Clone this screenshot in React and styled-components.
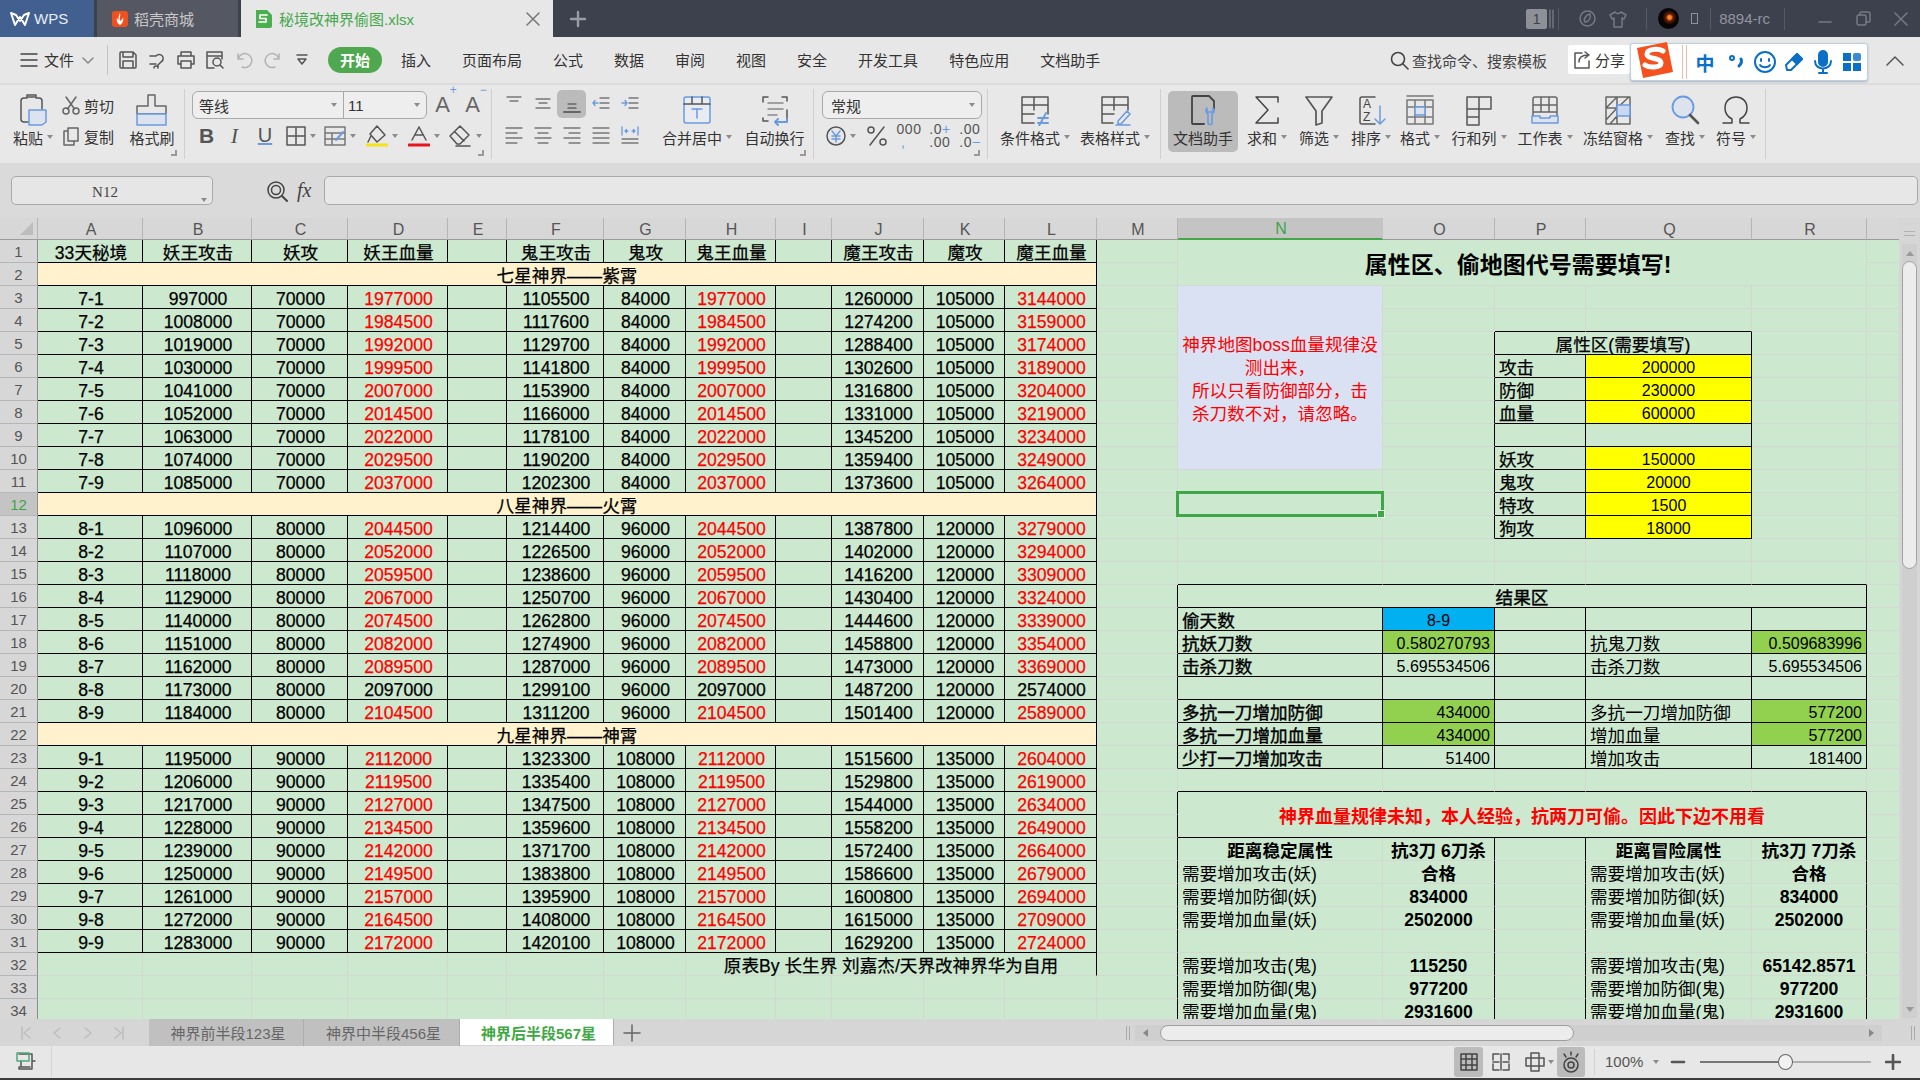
import React from 'react';
import styled, { createGlobalStyle } from 'styled-components';

const SANS = '"Liberation Sans", "Noto Sans CJK SC", sans-serif';
const GRID = '#d3d8d3';
const SHEET = '#cce8cf';

const Global = createGlobalStyle`
  html, body { margin: 0; padding: 0; width: 1920px; height: 1080px; overflow: hidden; background: #e7e7e7; }
  body { font-family: ${SANS}; color: #333; }
  * { box-sizing: border-box; }
`;

/* ---------- shell ---------- */
const Page = styled.div`
  width: 1920px; height: 1080px; display: flex; flex-direction: column; overflow: hidden;
  border-bottom: 2px solid #3c3c3c;
`;

/* ---------- title bar ---------- */
const TitleBar = styled.div`
  height: 37px; flex: none; background: #3d414e; display: flex; align-items: stretch;
`;
const WpsTab = styled.div`
  width: 94px; margin-right: 3px; background: #42608f; color: #e8edf5; display: flex; align-items: center;
  padding-left: 10px; gap: 4px; font-size: 15px;
`;
const StoreTab = styled.div`
  width: 141px; margin-right: 3px; background: #555863; color: #c8c8c8; display: flex; align-items: center;
  padding-left: 14px; gap: 5px; font-size: 15px;
`;
const DocTab = styled.div`
  width: 312px; background: #e7e7e7; color: #46a84c; display: flex; align-items: center; padding: 0 12px 0 13px;
  gap: 6px; font-size: 15px;
`;
const DocName = styled.span` flex: 1; `;
const NewTab = styled.div`
  width: 50px; display: flex; align-items: center; justify-content: center;
`;
const TitleRight = styled.div`
  margin-left: auto; display: flex; align-items: center; color: #92959e; font-size: 15px;
`;
const WinCount = styled.div`
  width: 21px; height: 20px; margin-right: 2px; background: #8e9097; color: #3d414e; border-radius: 2px; font-size: 14px;
  display: flex; align-items: center; justify-content: center;
`;
const TitleSep = styled.div`
  width: 1px; height: 22px; background: #565a66; margin: 0 ${p => p.$r ?? 10}px 0 ${p => p.$l ?? 10}px;
`;
const Avatar = styled.div`
  width: 21px; height: 21px; border-radius: 50%; background: radial-gradient(circle at 55% 45%, #ff8a2a 0 10%, #6a1c05 22%, #050505 45%);
`;
const TinyBox = styled.div`
  width: 7px; height: 11px; border: 1px solid #8f929b; margin-left: 12px;
`;
const ShirtSlot = styled.div` margin-left: 13px; `;
const WinBtn = styled.div`
  width: 38px; display: flex; justify-content: center; margin-left: ${p => p.$ml || 0}px;
`;

/* ---------- menu bar ---------- */
const MenuBar = styled.div`
  height: 48px; flex: none; background: #e7e7e7; border-bottom: 2px solid #dcdcdc; display: flex; align-items: center; position: relative;
  padding: 0 0 1px 20px; font-size: 15px; color: #333;
`;
const FileBtn = styled.div`
  display: flex; align-items: center; width: 87px;
`;
const FileLabel = styled.span` margin: 0 8px 0 6px; `;
const MenuSep = styled.div`
  width: 1px; height: 30px; background: #c4c4c4; margin-right: ${p => p.$mr || 0}px; margin-left: ${p => p.$ml || 0}px;
`;
const QuickIcon = styled.div`
  width: ${p => p.$w || 29}px; display: flex; justify-content: center;
`;
const StartPill = styled.div`
  width: 54px; height: 26px; margin: 0 19px 0 12px; background: #4fa84f; color: #fff; font-weight: 700; border-radius: 13px;
  display: flex; align-items: center; justify-content: center;
`;
const MenuItem = styled.div` margin-right: 31px; white-space: nowrap; `;
const SearchHint = styled.div`
  position: absolute; left: 1390px; top: 0; height: 46px; display: flex; align-items: center; gap: 3px; color: #444;
`;
const ShareBtn = styled.div`
  position: absolute; left: 1568px; top: 8px; width: 62px; height: 29px; background: #fff; border-radius: 2px;
  display: flex; align-items: center; padding-left: 4px; gap: 3px;
`;
const SogouBar = styled.div`
  position: absolute; left: 1630px; top: 6px; width: 238px; height: 38px; background: #fff; z-index: 3;
  border: 1px solid #bcd0e2; border-radius: 3px; box-shadow: 0 1px 2px rgba(90,120,150,.45);
  display: flex; align-items: center;
`;
const SogouLogo = styled.div` margin: -4px 0 0 3px; flex: none; `;
const SogouZh = styled.span`
  color: #0b6fc8; font-weight: 700; font-size: 19px; width: 27px; text-align: center; margin-left: 3px;
`;
const SogouRule = styled.div`
  width: 5px; height: 34px; border-left: 1px solid #f4b9a2; border-right: 1px solid #f4b9a2; margin: 0 2px 0 6px;
`;
const SogouItem = styled.div`
  width: 30px; display: flex; justify-content: center; margin-left: ${p => p.$ml || 0}px;
`;
const CollapseBtn = styled.div`
  position: absolute; left: 1885px; top: 14px;
`;

/* ---------- ribbon ---------- */
const Ribbon = styled.div`
  height: 78px; flex: none; background: #e8e8e8; display: flex; font-size: 15px; color: #333;
`;
const Group = styled.div`
  width: ${p => p.$w}px; flex: none; position: relative; padding-left: ${p => p.$pl || 0}px; display: flex;
  ${p => p.$sep !== false && 'border-right: 1px solid #cfcfcf;'}
  margin: 4px 0; height: 70px;
`;
const Launcher = styled.div`
  position: absolute; right: 7px; bottom: 3px; width: 6px; height: 6px;
  border-right: 2px solid #9a9a9a; border-bottom: 2px solid #9a9a9a;
`;
const BigBtn = styled.div`
  width: ${p => p.$w}px; flex: none; height: 61px; margin-top: 2px; display: flex; flex-direction: column; align-items: center;
  padding-top: 3px; border-radius: 5px; white-space: nowrap;
  ${p => p.$active && 'background: #bbbbbb;'}
`;
const BigIcon = styled.div` height: 32px; display: flex; align-items: center; justify-content: center; `;
const BigLabel = styled.div`
  height: 22px; display: flex; align-items: center; gap: 2px;
`;
const Caret = styled.i`
  display: inline-block; width: 0; height: 0; margin-left: 2px; border-left: 3.5px solid transparent; border-right: 3.5px solid transparent;
  border-top: 4px solid #8b8b8b;
`;
const ClipCol = styled.div`
  width: 64px; flex: none; display: flex; flex-direction: column; gap: 7px; padding-top: 4px;
`;
const ClipRow = styled.div` display: flex; align-items: center; gap: 3px; height: 24px; `;
const FontCol = styled.div`
  display: flex; flex-direction: column; padding-top: 2px;
`;
const FieldRow = styled.div` display: flex; align-items: center; height: 28px; `;
const FontBox = styled.div`
  width: 235px; height: 28px; background: #eeeeee; border: 1px solid #a9a9a9; border-radius: 6px; display: flex;
`;
const FontName = styled.div`
  width: 151px; border-right: 1px solid #a9a9a9; display: flex; align-items: center; justify-content: space-between; padding: 0 6px; font-size: 15px;
`;
const FontSize = styled.div`
  flex: 1; display: flex; align-items: center; justify-content: space-between; padding: 0 6px 0 4px; font-size: 15px;
`;
const GrowBtn = styled.div`
  width: ${p => p.$w || 30}px; margin-left: ${p => p.$ml || 0}px; display: flex; justify-content: center; position: relative; font-size: 22px; color: #666;
`;
const Sup = styled.span` position: relative; top: -8px; font-size: 12px; color: #6a9ae0; line-height: 1; `;
const IconRow = styled.div` display: flex; align-items: center; height: 33px; `;
const TinyBtn = styled.div`
  width: ${p => p.$w}px; margin-left: ${p => p.$ml || 0}px; display: flex; align-items: center; justify-content: center; gap: 2px; font-size: ${p => p.$fs || 20}px; color: #555;
  ${p => p.$bold && 'font-weight: 700;'} ${p => p.$it && 'font-style: italic; font-family: "Liberation Serif", serif;'}
  ${p => p.$u && 'text-decoration: underline; text-decoration-color: #6a9ae0;'}
`;
const NumStack = styled.div`
  display: flex; flex-direction: column; align-items: flex-start; font-size: 14px; line-height: 13px; color: #555; letter-spacing: 0.5px;
`;
const Accent = styled.span` color: #6a9ae0; `;
const AlignGrid = styled.div`
  width: 159px; flex: none; display: grid; grid-template-columns: repeat(5, 29px); grid-auto-rows: 28px; row-gap: 3px; padding-top: 1px;
`;
const AlignCell = styled.div`
  display: flex; align-items: center; justify-content: center; border-radius: 5px;
  ${p => p.$active && 'background: #bbbbbb;'}
`;
const NumBox = styled.div`
  width: 160px; height: 28px; background: #eeeeee; border: 1px solid #a9a9a9; border-radius: 6px; display: flex; align-items: center;
  justify-content: space-between; padding: 0 6px 0 8px; font-size: 15px;
`;

/* ---------- formula bar ---------- */
const FormulaBar = styled.div`
  height: 55px; flex: none; background: #dadada; display: flex; align-items: center; padding: 0 2px 0 11px;
`;
const NameBox = styled.div`
  width: 202px; height: 29px; background: #e6e6e6; border: 1px solid #a9a9a9; border-radius: 5px; display: flex; align-items: center; position: relative;
  justify-content: center; font-family: "Liberation Serif", serif; font-size: 15px; color: #444; padding: 3px 14px 0 0;
`;
const NameCaret = styled.div`
  position: absolute; right: 5px; top: 12px;
`;
const FxZone = styled.div`
  width: 111px; flex: none; display: flex; align-items: center; padding-left: 53px; gap: 9px;
`;
const FxText = styled.span`
  font-family: "Liberation Serif", serif; font-style: italic; font-size: 20px; color: #444;
`;
const FormulaInput = styled.div`
  flex: 1; height: 29px; background: #e7e7e7; border: 1px solid #a9a9a9; border-radius: 5px;
`;

/* ---------- sheet ---------- */
const SheetArea = styled.div`
  height: 801px; flex: none; display: flex; background: #d6d6d6;
`;
const SheetClip = styled.div`
  flex: 1; overflow: hidden; background: ${SHEET};
`;
const Table = styled.table`
  border-collapse: separate; border-spacing: 0; table-layout: fixed; width: 1899px;
`;
const ColHead = styled.th`
  height: 22px; padding: 1px 0 0 2px; background: ${p => p.$sel ? '#c4c4c4' : '#d7d7d7'}; color: ${p => p.$sel ? '#3ea548' : '#555'}; font-weight: 400; font-size: 16px;
  border-right: 1px solid ${p => p.$sel || p.$blank ? 'transparent' : '#b5b5b5'}; border-bottom: ${p => p.$sel ? '2px solid #44a84b' : '1px solid #9a9a9a'};
  line-height: 19px; overflow: hidden;
`;
const Corner = styled(ColHead)`
  position: relative; background: #d7d7d7; border-bottom: 1px solid #9a9a9a; border-right: 1px solid #b5b5b5;
`;
const CornerMark = styled.i`
  position: absolute; right: 4px; bottom: 4px; width: 0; height: 0; border-left: 13px solid transparent; border-bottom: 13px solid #bdbdbd;
`;
const RowHead = styled.th`
  height: 23px; padding: 2px 0 0; background: ${p => p.$sel ? '#c4c4c4' : '#d7d7d7'}; color: ${p => p.$sel ? '#3ea548' : '#555'}; font-weight: 400; font-size: 15px;
  border-right: 1px solid #8e8e8e; border-bottom: 1px solid #b5b5b5; line-height: 20px; overflow: hidden;
`;
const Cell = styled.td`
  height: 23px; padding: 4px ${p => p.$padR ?? 4}px 0 ${p => p.$padL ?? 4}px; position: relative; overflow: visible; white-space: ${p => p.$wrap ? 'normal' : 'nowrap'};
  background: ${p => p.$bg || SHEET}; color: ${p => p.$color || '#000'};
  font-size: ${p => p.$fs || 17.6}px; font-weight: ${p => p.$bold ? 700 : 400}; text-align: ${p => p.$al || 'center'};
  line-height: ${p => p.$lh || 18}px;
  -webkit-text-stroke: ${p => p.$st || 0}px currentColor;
  border-right: 1px solid ${p => p.$r ? '#000' : GRID};
  border-bottom: 1px solid ${p => p.$b ? '#000' : GRID};
`;
const Selection = styled.div`
  position: absolute; left: -2px; top: -2px; right: -2px; bottom: -2px; border: 3px solid #3fa64a; z-index: 2; pointer-events: none;
  &::after { content: ''; position: absolute; right: -4px; bottom: -4px; width: 6px; height: 6px; background: #3fa64a; border: 1px solid #e8f5e8; }
`;

/* vertical scrollbar */
const VBar = styled.div`
  width: 21px; flex: none; background: #d6d6d6; display: flex; flex-direction: column; align-items: center; padding-top: 13px;
`;
const VGrip = styled.div`
  width: 11px; height: 5px; border-top: 1px solid #b0b0b0; border-bottom: 1px solid #b0b0b0; margin-bottom: 8px;
`;
const VTrack = styled.div`
  width: 15px; flex: 1; background: #cfcfcf; margin-bottom: 1px; display: flex; flex-direction: column; align-items: center; padding-top: 7px; position: relative;
`;
const VThumb = styled.div`
  width: 15px; height: 308px; margin-top: 5px; background: #ececec; border: 1px solid #a2a2a2; border-radius: 8px;
`;
const ArrowUp = styled.i`
  width: 0; height: 0; border-left: 4px solid transparent; border-right: 4px solid transparent; border-bottom: 5px solid #999;
`;
const ArrowDown = styled.i`
  position: absolute; bottom: 6px; width: 0; height: 0; border-left: 4px solid transparent; border-right: 4px solid transparent; border-top: 5px solid #999;
`;

/* ---------- sheet tabs ---------- */
const TabsBar = styled.div`
  height: 27px; flex: none; background: #d6d6d6; display: flex; align-items: stretch; font-size: 15px;
`;
const TabNav = styled.div`
  width: 149px; flex: none; display: flex; align-items: center; padding-left: 20px; gap: 17px;
`;
const SheetTab = styled.div`
  width: ${p => p.$w || 155}px; display: flex; align-items: center; justify-content: center; padding-left: 4px;
  background: ${p => p.$active ? '#fff' : '#c0c0c0'}; color: ${p => p.$active ? '#3ea843' : '#666'};
  ${p => p.$active && 'font-weight: 700;'}
  border-right: 1px solid #adadad; margin-bottom: ${p => p.$active ? 1 : 0}px;
`;
const AddTab = styled.div`
  width: 36px; display: flex; align-items: center; justify-content: center;
`;
const HGrip = styled.div`
  margin-left: auto; width: 4px; height: 14px; align-self: center; border-left: 1px solid #aaa; border-right: 1px solid #aaa; margin-right: 5px;
`;
const HTrack = styled.div`
  width: 747px; height: 16px; align-self: center; background: #cfcfcf; display: flex; align-items: center; justify-content: space-between; padding: 0 8px 0 8px; position: relative;
`;
const HThumb = styled.div`
  position: absolute; left: 25px; top: 0; width: 414px; height: 16px; background: #ececec; border: 1px solid #9e9e9e; border-radius: 8px;
`;
const ArrowSide = styled.i`
  width: 0; height: 0; border-top: 4px solid transparent; border-bottom: 4px solid transparent;
  ${p => p.$left ? 'border-right: 5px solid #888;' : 'border-left: 5px solid #888;'}
`;
const HEnd = styled.div`
  width: 38px; display: flex; align-items: center; justify-content: center; align-self: center;
`;

/* ---------- status bar ---------- */
const StatusBar = styled.div`
  height: 31px; flex: none; background: #e7e7e7; display: flex; align-items: center; font-size: 15px; color: #555;
`;
const StatusLeft = styled.div`
  width: 52px; height: 100%; border-right: 1px solid #d4d4d4; display: flex; align-items: center; justify-content: center; margin-right: 1402px;
`;
const ViewBtn = styled.div`
  width: ${p => p.$w}px; height: 30px; margin-right: ${p => p.$mr || 0}px; display: flex; align-items: center; justify-content: center; border-radius: 3px;
  ${p => p.$active && 'background: #bbbbbb;'}
`;
const StatSep = styled.div` width: 1px; height: 26px; background: #d2d2d2; margin: 0 10px 0 9px; `;
const Zoom = styled.div` width: 50px; display: flex; align-items: center; gap: 8px; white-space: nowrap; `;
const Slider = styled.div`
  width: 171px; height: 2px; background: #b0b0b0; position: relative; margin: 0 14px;
  &::before { content: ''; position: absolute; left: 0; top: 0; width: 85px; height: 2px; background: #777; }
`;
const Thumb = styled.div`
  position: absolute; left: 78px; top: -7px; width: 15px; height: 16px; border-radius: 50%; background: #f2f2f2; border: 1px solid #666;
`;
const PlusMinus = styled.div`
  width: 16px; display: flex; justify-content: center; margin-left: ${p => p.$ml || 0}px;
`;

/* ---------- icons ---------- */
const Svg = styled.svg.attrs(p => ({ viewBox: p.$vb || `0 0 ${p.$s} ${p.$s}`, width: p.$s, height: p.$h || p.$s }))`
  display: block; flex: none; fill: none; stroke: ${p => p.$c || '#555'}; stroke-width: ${p => p.$sw || 1.5}; stroke-linecap: round; stroke-linejoin: round;
`;
const B = '#6a9ae0';

const IconBigGrid = ({ children }) => <Svg $s={32}>{children}</Svg>;
const Ic = {
  paste: <Svg $s={36}><path d="M6 27V9a3 3 0 0 1 3-3h3V3h9v3h3a3 3 0 0 1 3 3v8M6 27a3 3 0 0 0 3 3h4" /><path d="M13 5h7" /><path d="M14 18h17v12l-4 3H14z" fill="#dde3ee" stroke={B} /></Svg>,
  brush: <Svg $s={36} $c="#666"><path d="M14 3h7v11h11v8H3v-8h11z" /><path d="M3 22h29v11H3z" fill="#dde3ee" stroke={B} /></Svg>,
  merge: <IconBigGrid><rect x="3" y="3" width="26" height="26" rx="2" stroke={B} fill="#e8ecf2" /><path d="M3 10h26M11 3v7M21 3v7" /><path d="M11 15h10M16 15v9" stroke={B} /></IconBigGrid>,
  wrap: <IconBigGrid><path d="M9 3H4v5M23 3h5v4M4 24v3h5M28 16v9" /><path d="M9 9h15M9 15h15M9 21h9" stroke="#888" /><path d="M28 25v3h-12M19 25l-3 3 3 3" stroke={B} strokeWidth="2" /></IconBigGrid>,
  cond: <IconBigGrid><path d="M15 29H3V3h26v17M3 11h26M3 20h12M15 3v13" /><path d="M19 24h10M19 29h10M27 19l-7 13" stroke={B} strokeWidth="1.8" /></IconBigGrid>,
  tstyle: <IconBigGrid><path d="M14 29H3V3h26v13M3 11h26M3 20h12M15 3v13" /><path d="M19 27l9-10 3 3-9 10h-3z" stroke={B} /><path d="M17 31h14" stroke={B} /></IconBigGrid>,
  helper: <IconBigGrid><path d="M17 30H6a1 1 0 0 1-1-1V3a1 1 0 0 1 1-1h16l5 5v8" stroke="#444" strokeWidth="1.8" /><path d="M20 14c-2 2-1 5 1 6v9c0 2 4 2 4 0v-9c2-1 3-4 1-6v4h-6z" stroke={B} strokeWidth="1.6" /></IconBigGrid>,
  sigma: <IconBigGrid><path d="M27 8V3H5l12 13L5 29h22v-5" stroke="#444" /></IconBigGrid>,
  funnel: <IconBigGrid><path d="M3 3h26L19 17v12l-6 2V17z" stroke="#555" strokeWidth="1.7" /></IconBigGrid>,
  sort: <Svg $s={32}><path d="M20 3H7a2 2 0 0 0-2 2v23a2 2 0 0 0 2 2h13" /><text x="8" y="14" fontSize="12" fill="#444" stroke="none" fontFamily="Liberation Sans">A</text><text x="8" y="27" fontSize="12" fill="#444" stroke="none" fontFamily="Liberation Sans">Z</text><path d="M25 12v18M20 25l5 5 5-5" stroke={B} /></Svg>,
  fmt: <IconBigGrid><path d="M3 2h26M3 6h26v24H3zM3 13h26M3 23h26M11 6v24M21 6v24" stroke="#777" /><rect x="11" y="13" width="10" height="8" fill="#dde3ee" stroke={B} /></IconBigGrid>,
  rowcol: <IconBigGrid><path d="M4 3h24v12H16v16H4zM4 15h12M16 3v12M4 23h12" stroke="#555" /></IconBigGrid>,
  sheet: <IconBigGrid><path d="M4 22V5a2 2 0 0 1 2-2h20a2 2 0 0 1 2 2v17M4 11h24M4 18h24M12 3v15M20 3v15" stroke="#666" /><path d="M3 22h8v2h10v-2h8v7H3z" stroke={B} fill="#dde3ee" /></IconBigGrid>,
  freeze: <IconBigGrid><path d="M4 3h24v27H4zM4 14h24M15 3v27M15 3L4 14M27 3L15 14M15 14L4 26M15 22L8 30" stroke="#666" /><rect x="15" y="11" width="13" height="11" fill="#c9d9f2" stroke={B} /></IconBigGrid>,
  find: <IconBigGrid><circle cx="14" cy="13" r="10.500" fill="#dde3ee" stroke={B} strokeWidth="1.8" /><path d="M21 21l8 8" stroke="#555" strokeWidth="2.6" /></IconBigGrid>,
  omega: <IconBigGrid><path d="M3 29h9v-4c-4-2-7-6-7-11C5 7 10 3 16 3s11 4 11 11c0 5-3 9-7 11v4h9" stroke="#444" /></IconBigGrid>,
};

const line = (d, c) => <path d={d} stroke={c} />;
const Small = ({ children, s = 20, c }) => <Svg $s={s} $c={c} $sw={1.3}>{children}</Svg>;
const aligns = [
  <Small c="#777">{line('M3 3h14M6 7h8')}</Small>,
  <Small c="#777">{line('M3 5h14M6 9h8M3 14h14')}</Small>,
  <Small c="#666">{line('M6 10h8M6 14h8')}<path d="M2 18h16" strokeWidth="2" /></Small>,
  <Small c="#777">{line('M9 4h9M9 9h9M9 14h9')}{line('M7 9H2M4 6.5L2 9l2 2.5', B)}</Small>,
  <Small c="#777">{line('M9 4h9M9 9h9M9 14h9')}{line('M2 9h5M5 6.5L7 9l-2 2.5', B)}</Small>,
  <Small c="#777">{line('M2 3h16M2 8h11M2 13h16M2 18h11')}</Small>,
  <Small c="#777">{line('M2 3h16M5 8h10M2 13h16M5 18h10')}</Small>,
  <Small c="#777">{line('M2 3h16M7 8h11M2 13h16M7 18h11')}</Small>,
  <Small c="#777">{line('M2 3h16M2 8h16M2 13h16M2 18h16')}</Small>,
  <Small c="#777">{line('M2 2v8M18 2v8', B)}{line('M5 6h3M5 6l1.5-1.5M5 6l1.5 1.5M15 6h-3M15 6l-1.5-1.5M15 6l-1.5 1.5', B)}{line('M2 14h16M2 18h16')}</Small>,
];

/* ---------- sheet data ---------- */
const COLS = 'ABCDEFGHIJKLMNOPQRS'.split('');
const WIDTHS = [105, 109, 96, 100, 59, 97, 82, 90, 56, 92, 81, 92, 81, 205, 112, 91, 166, 115, 33];
const ROWS = 34;

const pad = (row, col) => `${col}${row}`;
const rawData = [
  ['7-1',997000,70000,1977000,1105500,84000,1260000,105000,3144000],
  ['7-2',1008000,70000,1984500,1117600,84000,1274200,105000,3159000],
  ['7-3',1019000,70000,1992000,1129700,84000,1288400,105000,3174000],
  ['7-4',1030000,70000,1999500,1141800,84000,1302600,105000,3189000],
  ['7-5',1041000,70000,2007000,1153900,84000,1316800,105000,3204000],
  ['7-6',1052000,70000,2014500,1166000,84000,1331000,105000,3219000],
  ['7-7',1063000,70000,2022000,1178100,84000,1345200,105000,3234000],
  ['7-8',1074000,70000,2029500,1190200,84000,1359400,105000,3249000],
  ['7-9',1085000,70000,2037000,1202300,84000,1373600,105000,3264000],
  null,
  ['8-1',1096000,80000,2044500,1214400,96000,1387800,120000,3279000],
  ['8-2',1107000,80000,2052000,1226500,96000,1402000,120000,3294000],
  ['8-3',1118000,80000,2059500,1238600,96000,1416200,120000,3309000],
  ['8-4',1129000,80000,2067000,1250700,96000,1430400,120000,3324000],
  ['8-5',1140000,80000,2074500,1262800,96000,1444600,120000,3339000],
  ['8-6',1151000,80000,2082000,1274900,96000,1458800,120000,3354000],
  ['8-7',1162000,80000,2089500,1287000,96000,1473000,120000,3369000],
  ['8-8',1173000,80000,2097000,1299100,96000,1487200,120000,2574000],
  ['8-9',1184000,80000,2104500,1311200,96000,1501400,120000,2589000],
  null,
  ['9-1',1195000,90000,2112000,1323300,108000,1515600,135000,2604000],
  ['9-2',1206000,90000,2119500,1335400,108000,1529800,135000,2619000],
  ['9-3',1217000,90000,2127000,1347500,108000,1544000,135000,2634000],
  ['9-4',1228000,90000,2134500,1359600,108000,1558200,135000,2649000],
  ['9-5',1239000,90000,2142000,1371700,108000,1572400,135000,2664000],
  ['9-6',1250000,90000,2149500,1383800,108000,1586600,135000,2679000],
  ['9-7',1261000,90000,2157000,1395900,108000,1600800,135000,2694000],
  ['9-8',1272000,90000,2164500,1408000,108000,1615000,135000,2709000],
  ['9-9',1283000,90000,2172000,1420100,108000,1629200,135000,2724000],
];

const cells = {};
const put = (addr, spec) => { cells[addr] = spec; };
const RED = '#ff0000';
const LEFT_STROKE = 0.25;

['33天秘境','妖王攻击','妖攻','妖王血量','','鬼王攻击','鬼攻','鬼王血量','','魔王攻击','魔攻','魔王血量'].forEach((t, i) => put(pad(1, COLS[i]), { t, st: LEFT_STROKE, padL: 5, padR: 3 }));
put('A2', { t: '七星神界——紫霄', cs: 12, bg: '#fff2cc', st: LEFT_STROKE });
put('A12', { t: '八星神界——火霄', cs: 12, bg: '#fff2cc', st: LEFT_STROKE });
put('A22', { t: '九星神界——神霄', cs: 12, bg: '#fff2cc', st: LEFT_STROKE });
rawData.forEach((r, i) => {
  if (!r) return;
  const row = i + 3;
  const black = row === 20;
  const vals = [r[0], r[1], r[2], r[3], '', r[4], r[5], r[3], '', r[6], r[7], r[8]];
  vals.forEach((v, k) => put(pad(row, COLS[k]), {
    t: String(v),
    st: LEFT_STROKE,
    padL: 5,
    padR: 3,
    color: (k === 3 || k === 7 || k === 11) && !black ? RED : undefined,
  }));
});
put('H32', { t: '原表By 长生界 刘嘉杰/天界改神界华为自用', cs: 5, st: LEFT_STROKE });

put('N1', { t: '属性区、偷地图代号需要填写!', cs: 5, rs: 2, bold: true, fs: 23, padR: 12, lh: 24 });
put('N3', {
  rs: 8, bg: '#d9e1f2', color: RED, wrap: true, lh: 23, padL: 2, padR: 2,
  t: <>神界地图boss血量规律没<br />测出来，<br />所以只看防御部分，击<br />杀刀数不对，请忽略。</>,
});
put('P5', { t: '属性区(需要填写)', cs: 2, st: LEFT_STROKE });
[['攻击', '200000', 6], ['防御', '230000', 7], ['血量', '600000', 8], ['', '', 9], ['妖攻', '150000', 10], ['鬼攻', '20000', 11], ['特攻', '1500', 12], ['狗攻', '18000', 13]].forEach(([l, v, r]) => {
  put(`P${r}`, { t: l, al: 'left', st: LEFT_STROKE });
  put(`Q${r}`, { t: v, fs: 16, bg: v ? '#ffff00' : undefined });
});
put('N16', { t: '结果区', cs: 5, st: 0.4 });
put('N17', { t: '偷天数', al: 'left', st: 0.4 });
put('O17', { t: '8-9', fs: 16, bg: '#00b0f0' });
const resultRows = [
  [18, '抗妖刀数', '0.580270793', '抗鬼刀数', '0.509683996', '#92d050'],
  [19, '击杀刀数', '5.695534506', '击杀刀数', '5.695534506'],
  [21, '多抗一刀增加防御', '434000', '多抗一刀增加防御', '577200', '#92d050'],
  [22, '多抗一刀增加血量', '434000', '增加血量', '577200', '#92d050'],
  [23, '少打一刀增加攻击', '51400', '增加攻击', '181400'],
];
resultRows.forEach(([r, a, b, c, d, bg]) => {
  put(`N${r}`, { t: a, al: 'left', st: 0.4 });
  put(`O${r}`, { t: b, al: 'right', fs: 16, bg });
  put(`Q${r}`, { t: c, al: 'left' });
  put(`R${r}`, { t: d, al: 'right', fs: 16, bg });
});
put('N25', { t: '神界血量规律未知，本人经验，抗两刀可偷。因此下边不用看', cs: 5, rs: 2, color: RED, bold: true, fs: 18 });
put('N27', { t: '距离稳定属性', bold: true });
put('O27', { t: '抗3刀 6刀杀', bold: true, padL: 0, padR: 0 });
put('Q27', { t: '距离冒险属性', bold: true });
put('R27', { t: '抗3刀 7刀杀', bold: true, padL: 0, padR: 0 });
[
  [28, '需要增加攻击(妖)', '合格', '合格'],
  [29, '需要增加防御(妖)', '834000', '834000'],
  [30, '需要增加血量(妖)', '2502000', '2502000'],
  [32, '需要增加攻击(鬼)', '115250', '65142.8571'],
  [33, '需要增加防御(鬼)', '977200', '977200'],
  [34, '需要增加血量(鬼)', '2931600', '2931600'],
].forEach(([r, l, a, b]) => {
  put(`N${r}`, { t: l, al: 'left' });
  put(`O${r}`, { t: a, bold: true });
  put(`Q${r}`, { t: l, al: 'left' });
  put(`R${r}`, { t: b, bold: true, padL: 0, padR: 0 });
});

/* black edges: right-of-cell and bottom-of-cell */
const vEdge = new Set();
const hEdge = new Set();
const ci = c => COLS.indexOf(c);
const boxGrid = (c1, c2, r1, r2) => {
  for (let r = r1; r <= r2; r++) {
    for (let c = ci(c1); c <= ci(c2); c++) {
      vEdge.add(`${c},${r}`);
      hEdge.add(`${c},${r}`);
      if (c === ci(c1) && c > 0) vEdge.add(`${c - 1},${r}`);
      if (r === r1 && r > 1) hEdge.add(`${c},${r - 1}`);
    }
  }
};
boxGrid('A', 'L', 1, 31);
vEdge.add(`${ci('L')},32`);
boxGrid('P', 'Q', 5, 13);
boxGrid('N', 'R', 16, 23);
boxGrid('N', 'R', 25, 26);
for (let r = 27; r <= 34; r++) ['M', 'O', 'P', 'R'].forEach(c => vEdge.add(`${ci(c)},${r}`));
for (let c = ci('N'); c <= ci('R'); c++) hEdge.add(`${c},26`);

const renderRow = (row, covered) => {
  const out = [];
  for (let c = 0; c < COLS.length; c++) {
    const key = `${c},${row}`;
    if (covered.has(key)) continue;
    const spec = cells[pad(row, COLS[c])] || {};
    const cs = spec.cs || 1;
    const rs = spec.rs || 1;
    for (let y = row; y < row + rs; y++) for (let x = c; x < c + cs; x++) if (x !== c || y !== row) covered.add(`${x},${y}`);
    const isSel = row === 12 && COLS[c] === 'N';
    out.push(
      <Cell
        key={COLS[c]}
        colSpan={cs > 1 ? cs : undefined}
        rowSpan={rs > 1 ? rs : undefined}
        $r={vEdge.has(`${c + cs - 1},${row}`)}
        $b={hEdge.has(`${c},${row + rs - 1}`)}
        $bg={spec.bg}
        $color={spec.color}
        $bold={spec.bold}
        $al={spec.al}
        $fs={spec.fs}
        $lh={spec.lh}
        $padL={spec.padL}
        $padR={spec.padR}
        $wrap={spec.wrap}
        $st={spec.st}
      >
        {spec.t}
        {isSel && <Selection />}
      </Cell>
    );
  }
  return out;
};

const Sheet = () => {
  const covered = new Set();
  const rows = [];
  for (let r = 1; r <= ROWS; r++) {
    rows.push(
      <tr key={r}>
        <RowHead $sel={r === 12}>{r}</RowHead>
        {renderRow(r, covered)}
      </tr>
    );
  }
  return (
    <Table>
      <colgroup>
        <col width="38" />
        {WIDTHS.map((w, i) => <col key={i} width={w} />)}
      </colgroup>
      <thead>
        <tr>
          <Corner><CornerMark /></Corner>
          {COLS.map(c => <ColHead key={c} $sel={c === 'N'} $blank={c === 'S'}>{c === 'S' ? '' : c}</ColHead>)}
        </tr>
      </thead>
      <tbody>{rows}</tbody>
    </Table>
  );
};

const Label = ({ children, caret }) => <BigLabel>{children}{caret && <Caret />}</BigLabel>;
const Big = ({ w, icon, label, caret, active }) => (
  <BigBtn $w={w} $active={active}>
    <BigIcon>{icon}</BigIcon>
    <Label caret={caret}>{label}</Label>
  </BigBtn>
);

export default function App() {
  return (
    <Page>
      <Global />
      <TitleBar>
        <WpsTab>
          <Svg $s={20} $c="#fff" $sw={2}><path d="M1 4l4 12 5-8 5 8 4-12-5 2-4 6-4-6z" /></Svg>
          WPS
        </WpsTab>
        <StoreTab>
          <Svg $s={18} $c="none"><rect x="1" y="1" width="16" height="16" rx="3" fill="#f0501e" /><path d="M9 3c1 3-1 5 0 8 2-1 3-3 3-4 1 4-1 7-3 8-2-1-4-4-3-7 1 1 1 2 1 3 1-2 0-5 2-8z" fill="#fff" /></Svg>
          稻壳商城
        </StoreTab>
        <DocTab>
          <Svg $s={19} $c="none"><path d="M2 1h11l5 5v11a2 2 0 0 1-2 2H2z" fill="#4bae4f" /><path d="M13 6H6v3.500h6V13H5" stroke="#fff" strokeWidth="1.7" /></Svg>
          <DocName>秘境改神界偷图.xlsx</DocName>
          <Svg $s={16} $c="#777"><path d="M2 2l12 12M14 2L2 14" /></Svg>
        </DocTab>
        <NewTab><Svg $s={18} $c="#9a9ca3" $sw={2.4}><path d="M9 2v14M2 9h14" /></Svg></NewTab>
        <TitleRight>
          <WinCount>1</WinCount>
          <Svg $s={5} $h={20} $vb="0 0 5 20" $c="#8e9097" $sw={1}><path d="M1 1v18M4 1v18" /></Svg>
          <TitleSep $l={4} $r={20} />
          <Svg $s={17} $c="#777a84"><circle cx="8.500" cy="8.500" r="7.500" /><path d="M6 12c-2-3 1-7 5-8 1 4-1 7-4 8z" /></Svg>
          <ShirtSlot><Svg $s={18} $c="#777a84"><path d="M6 2L1 5l2 4 2-1v9h8V8l2 1 2-4-5-3c-1 2-5 2-6 0z" /></Svg></ShirtSlot>
          <TitleSep $l={19} $r={11} />
          <Avatar />
          <TinyBox />
          <TitleSep $l={12} $r={8} />
          <span>8894-rc</span>
          <TitleSep $l={14} $r={0} />
          <WinBtn $ml={21}><Svg $s={14} $c="#777a84"><path d="M1 10h12" /></Svg></WinBtn>
          <WinBtn><Svg $s={15} $c="#777a84"><rect x="1" y="4" width="9" height="10" rx="2" /><path d="M4 4V2a1 1 0 0 1 1-1h7a2 2 0 0 1 2 2v7a1 1 0 0 1-1 1h-3" /></Svg></WinBtn>
          <WinBtn><Svg $s={14} $c="#777a84"><path d="M1 1l12 12M13 1L1 13" /></Svg></WinBtn>
        </TitleRight>
      </TitleBar>

      <MenuBar>
        <FileBtn>
          <Svg $s={18} $c="#444"><path d="M1 3h16M1 9h16M1 15h16" /></Svg>
          <FileLabel>文件</FileLabel>
          <Svg $s={12} $c="#888"><path d="M1 4l5 5 5-5" /></Svg>
        </FileBtn>
        <MenuSep $mr={5} />
        <QuickIcon><Svg $s={20}><path d="M2 3a1 1 0 0 1 1-1h12l3 3v12a1 1 0 0 1-1 1H3a1 1 0 0 1-1-1zM5 2v5h10V2M5 18v-7h10v7" /></Svg></QuickIcon>
        <QuickIcon><Svg $s={20}><path d="M3 6h6M3 14h6M9 6a4 4 0 1 1 5 6l-3 3v3M7 18a2 2 0 1 1 4 0" /></Svg></QuickIcon>
        <QuickIcon><Svg $s={20}><path d="M5 6V2h10v4M5 14H2V6h16v8h-3M5 11h10v7H5z" /></Svg></QuickIcon>
        <QuickIcon><Svg $s={20}><path d="M9 18H2V2h15v7M2 6h15" /><circle cx="12" cy="12" r="4" /><path d="M15 15l3 3" /></Svg></QuickIcon>
        <QuickIcon><Svg $s={18} $c="#b2b2b2"><path d="M3 3v5h5M3 8a7 7 0 1 1 4 8" /></Svg></QuickIcon>
        <QuickIcon><Svg $s={18} $c="#b2b2b2"><path d="M15 3v5h-5M15 8a7 7 0 1 0-4 8" /></Svg></QuickIcon>
        <QuickIcon><Svg $s={14} $c="#555"><path d="M2 2h10M3 6l4 5 4-5z" /></Svg></QuickIcon>
        <StartPill>开始</StartPill>
        {['插入', '页面布局', '公式', '数据', '审阅', '视图', '安全', '开发工具', '特色应用', '文档助手'].map(m => <MenuItem key={m}>{m}</MenuItem>)}
        <SearchHint>
          <Svg $s={19} $c="#444" $sw={1.6}><circle cx="8" cy="8" r="6.500" /><path d="M13 13l5 5" /></Svg>
          查找命令、搜索模板
        </SearchHint>
        <ShareBtn>
          <Svg $s={20} $c="#555"><path d="M10 3H3v15h14v-7" /><path d="M7 12c0-5 4-7 9-7M13 2l4 3-4 3" /></Svg>
          分享
        </ShareBtn>
        <SogouBar>
          <SogouLogo>
            <Svg $s={42} $c="none">
              <path d="M3 9l30-6 6 30-30 6z" fill="#f4511e" />
              <path d="M29 12c-5-3-16-2-16 3 0 6 14 3 14 9 0 5-12 5-16 2" stroke="#fff" strokeWidth="5" />
            </Svg>
          </SogouLogo>
          <SogouRule />
          <SogouZh>中</SogouZh>
          <SogouItem $ml={3}><Svg $s={20} $c="#0b6fc8" $sw={2}><circle cx="6" cy="6" r="2" /><path d="M15 7c1 2 0 5-2 7" strokeWidth="3" /></Svg></SogouItem>
          <SogouItem><Svg $s={24} $c="#0b6fc8" $sw={2}><circle cx="12" cy="12" r="10" /><path d="M8 9v2M16 9v2M7 15c2 3 8 3 10 0" /></Svg></SogouItem>
          <SogouItem><Svg $s={22} $c="#0b6fc8" $sw={2}><path d="M3 14L14 3l5 5L8 19H4z" /><path d="M14 3l5 5-5 5-5-5z" fill="#0b6fc8" /></Svg></SogouItem>
          <SogouItem><Svg $s={24} $c="#0b6fc8" $sw={2}><rect x="8" y="1" width="8" height="15" rx="4" fill="#0b6fc8" /><path d="M4 11c0 10 16 10 16 0M12 19v4M8 23h8" /></Svg></SogouItem>
          <SogouItem><Svg $s={20} $c="none"><rect x="1" y="1" width="8" height="8" fill="#0b6fc8" /><rect x="11" y="1" width="8" height="8" rx="2" fill="#3a8ad5" /><rect x="1" y="11" width="8" height="8" fill="#0b6fc8" /><rect x="11" y="11" width="8" height="8" fill="#0b6fc8" /></Svg></SogouItem>
        </SogouBar>
        <CollapseBtn><Svg $s={20} $c="#555"><path d="M2 14L10 6l8 8" /></Svg></CollapseBtn>
      </MenuBar>

      <Ribbon>
        <Group $w={185} $pl={5}>
          <Big w={56} icon={Ic.paste} label="粘贴" caret />
          <ClipCol>
            <ClipRow><Svg $s={20} $c="#666"><circle cx="5" cy="16" r="3" /><circle cx="15" cy="16" r="3" /><path d="M6.500 14L15 2M13.500 14L5 2" /></Svg>剪切</ClipRow>
            <ClipRow><Svg $s={20} $c="#666"><path d="M7 15V2h10v13zM7 5H3v14h10v-4" /></Svg>复制</ClipRow>
          </ClipCol>
          <Big w={54} icon={Ic.brush} label="格式刷" />
          <Launcher />
        </Group>

        <Group $w={307} $pl={7}>
          <FontCol>
            <FieldRow>
              <FontBox>
                <FontName>等线<Caret /></FontName>
                <FontSize>11<Caret /></FontSize>
              </FontBox>
              <GrowBtn $w={30} $ml={4}>A<Sup>+</Sup></GrowBtn>
              <GrowBtn $w={30}>A<Sup>−</Sup></GrowBtn>
            </FieldRow>
            <IconRow>
              <TinyBtn $w={29} $bold $fs={21}>B</TinyBtn>
              <TinyBtn $w={27} $it $fs={22}>I</TinyBtn>
              <TinyBtn $w={34} $u $fs={20}>U</TinyBtn>
              <TinyBtn $w={37}><Svg $s={20} $c="#555"><path d="M1 1h18v18H1zM10 1v18M1 10h18" /></Svg><Caret /></TinyBtn>
              <TinyBtn $w={41}><Svg $s={22} $c="#777"><path d="M1 2h20v18H1zM1 8h20M1 14h20M8 8v12" /><path d="M12 15l7-8" stroke={B} strokeWidth="2" /></Svg><Caret /></TinyBtn>
              <TinyBtn $w={43}><Svg $s={22} $c="#555"><path d="M11 1l8 9-8 7-7-8zM2 17l3-6" /><path d="M1 20h20" stroke="#f6e21a" strokeWidth="3" /></Svg><Caret /></TinyBtn>
              <TinyBtn $w={41}><Svg $s={22} $c="#555"><path d="M4 15L11 2l7 13M7 10h8" /><path d="M1 20h20" stroke="#e8141a" strokeWidth="3" /></Svg><Caret /></TinyBtn>
              <TinyBtn $w={41}><Svg $s={24} $c="#555"><path d="M2 12L12 2l9 9-9 9h-3zM7 8l9 9M8 22h14" /></Svg><Caret /></TinyBtn>
            </IconRow>
          </FontCol>
          <Launcher />
        </Group>

        <Group $w={322} $pl={7}>
          <AlignGrid>
            {aligns.map((a, i) => <AlignCell key={i} $active={i === 2}>{a}</AlignCell>)}
          </AlignGrid>
          <Big w={78} icon={Ic.merge} label="合并居中" caret />
          <Big w={77} icon={Ic.wrap} label="自动换行" />
          <Launcher />
        </Group>

        <Group $w={174} $pl={8}>
          <FontCol>
            <FieldRow><NumBox>常规<Caret /></NumBox></FieldRow>
            <IconRow>
              <TinyBtn $w={38}><Svg $s={20} $c="#555"><circle cx="10" cy="10" r="9" /><path d="M6 5l4 5 4-5M6 10h8M6 13h8M10 10v6" stroke={B} /></Svg><Caret /></TinyBtn>
              <TinyBtn $w={34}><Svg $s={22} $c="#555"><circle cx="5" cy="5" r="3" /><circle cx="17" cy="17" r="3" /><path d="M18 2L4 20" /></Svg></TinyBtn>
              <TinyBtn $w={30}><NumStack>000<Accent>&nbsp;,</Accent></NumStack></TinyBtn>
              <TinyBtn $w={32}><NumStack><span>.0<Accent>+</Accent></span><span>.00</span></NumStack></TinyBtn>
              <TinyBtn $w={28}><NumStack><span>.00</span><span>.0<Accent>−</Accent></span></NumStack></TinyBtn>
            </IconRow>
          </FontCol>
          <Launcher />
        </Group>

        <Group $w={173} $pl={7}>
          <Big w={80} icon={Ic.cond} label="条件格式" caret />
          <Big w={80} icon={Ic.tstyle} label="表格样式" caret />
        </Group>

        <Group $w={605} $pl={7}>
          <Big w={70} icon={Ic.helper} label="文档助手" active />
          <Big w={58} icon={Ic.sigma} label="求和" caret />
          <Big w={46} icon={Ic.funnel} label="筛选" caret />
          <Big w={58} icon={Ic.sort} label="排序" caret />
          <Big w={40} icon={Ic.fmt} label="格式" caret />
          <Big w={78} icon={Ic.rowcol} label="行和列" caret />
          <Big w={54} icon={Ic.sheet} label="工作表" caret />
          <Big w={92} icon={Ic.freeze} label="冻结窗格" caret />
          <Big w={42} icon={Ic.find} label="查找" caret />
          <Big w={60} icon={Ic.omega} label="符号" caret />
        </Group>
      </Ribbon>

      <FormulaBar>
        <NameBox>N12<NameCaret><Caret /></NameCaret></NameBox>
        <FxZone>
          <Svg $s={22} $c="#444"><circle cx="10" cy="10" r="8" /><circle cx="10" cy="10" r="4.500" /><path d="M16 16l5 5" strokeWidth="2" /></Svg>
          <FxText>fx</FxText>
        </FxZone>
        <FormulaInput />
      </FormulaBar>

      <SheetArea>
        <SheetClip><Sheet /></SheetClip>
        <VBar>
          <VGrip />
          <VTrack>
            <ArrowUp />
            <VThumb />
            <ArrowDown />
          </VTrack>
        </VBar>
      </SheetArea>

      <TabsBar>
        <TabNav>
          {['M2 1v12M10 2L4 7l6 5', 'M9 2L3 7l6 5', 'M3 2l6 5-6 5', 'M2 2l6 5-6 5M10 1v12'].map(d => (
            <Svg key={d} $s={14} $c="#bdbdbd"><path d={d} /></Svg>
          ))}
        </TabNav>
        <SheetTab>神界前半段123星</SheetTab>
        <SheetTab $w={156}>神界中半段456星</SheetTab>
        <SheetTab $active $w={154}>神界后半段567星</SheetTab>
        <AddTab><Svg $s={18} $c="#666"><path d="M9 1v16M1 9h16" /></Svg></AddTab>
        <HGrip />
        <HTrack>
          <ArrowSide $left />
          <HThumb />
          <ArrowSide />
        </HTrack>
        <HEnd><HGrip /></HEnd>
      </TabsBar>

      <StatusBar>
        <StatusLeft>
          <Svg $s={20} $c="#555"><path d="M3 2h13v7h3M5 9v6M16 9v8H3v-2h11" /><rect x="1" y="1" width="12" height="8" stroke="#4fa87a" /></Svg>
        </StatusLeft>
        <ViewBtn $w={29} $active $mr={7}><Svg $s={20} $c="#444"><path d="M2 2h16v16H2zM2 7h16M2 13h16M7 2v16M13 2v16" /></Svg></ViewBtn>
        <ViewBtn $w={22} $mr={10}><Svg $s={20} $c="#555"><path d="M8 2H2v6M12 2h6v6M2 12v6h6M18 12v6h-6M2 10h6M12 10h6M10 2v16" /></Svg></ViewBtn>
        <ViewBtn $w={33} $mr={2}><Svg $s={22} $c="#555"><path d="M7 7V2h8v5h5v8h-5v5H7v-5H2V7zM7 7v8h8V7z" /></Svg><Caret /></ViewBtn>
        <ViewBtn $w={28} $active><Svg $s={24} $c="#444"><circle cx="12" cy="15" r="7" /><circle cx="12" cy="15" r="3" /><path d="M12 2v3M5 4l2 3M19 4l-2 3" /></Svg></ViewBtn>
        <StatSep />
        <Zoom>100%<Caret /></Zoom>
        <PlusMinus $ml={15}><Svg $s={16} $c="#555" $sw={2.6}><path d="M2 8h12" /></Svg></PlusMinus>
        <Slider><Thumb /></Slider>
        <PlusMinus><Svg $s={16} $c="#555" $sw={2.6}><path d="M8 1v14M1 8h14" /></Svg></PlusMinus>
      </StatusBar>
    </Page>
  );
}
